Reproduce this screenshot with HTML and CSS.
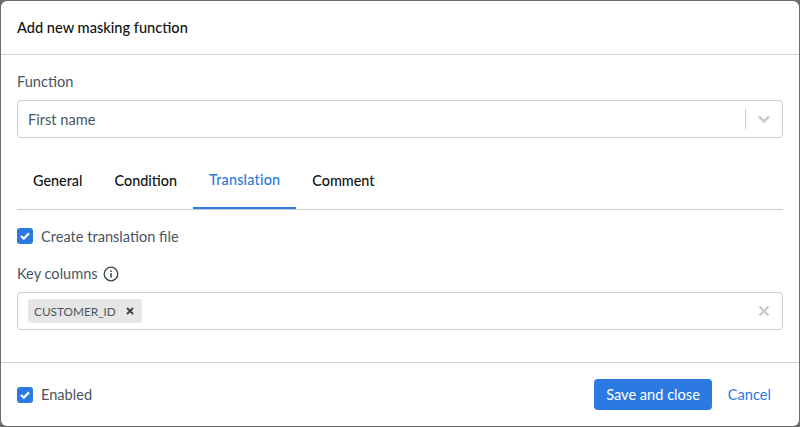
FILE: index.html
```html
<!DOCTYPE html>
<html lang="en">
<head>
<meta charset="utf-8">
<title>Add new masking function</title>
<link rel="stylesheet" href="styles.css">
</head>
<body>
<div class="modal">
  <header class="modal-header">Add new masking function</header>
  <main class="modal-body">
    <div class="field-label">Function</div>
    <div class="select">
      <span class="select-value">First name</span>
      <span class="select-sep"></span>
      <svg class="chevron" width="20" height="20" viewBox="0 0 20 20"><path d="M5 7.5 L10 12.5 L15 7.5" fill="none" stroke="#ccc" stroke-width="2.6"/></svg>
    </div>
    <nav class="tabs">
      <span class="tab">General</span>
      <span class="tab">Condition</span>
      <span class="tab active">Translation</span>
      <span class="tab">Comment</span>
    </nav>
    <label class="check check-top">
      <span class="box"><svg width="10" height="8" viewBox="0 0 10 8"><path d="M1 4 L3.8 6.6 L9 1.4" fill="none" stroke="#fff" stroke-width="2.2"/></svg></span>
      <span>Create translation file</span>
    </label>
    <div class="field-label key-label">
      <span>Key columns</span>
      <svg width="16" height="16" viewBox="0 0 16 16"><circle cx="8" cy="8" r="6.8" fill="none" stroke="#3a4350" stroke-width="1.3"/><rect x="7.3" y="7" width="1.5" height="4.6" fill="#3a4350"/><rect x="7.3" y="4.4" width="1.5" height="1.6" fill="#3a4350"/></svg>
    </div>
    <div class="select multi">
      <span class="chip"><span class="chip-text">CUSTOMER_ID</span><svg width="8" height="8" viewBox="0 0 8 8"><path d="M1 1 L7 7 M7 1 L1 7" stroke="#3a4350" stroke-width="1.9"/></svg></span>
      <svg class="clear" width="12" height="12" viewBox="0 0 12 12"><path d="M1.5 1.5 L10.5 10.5 M10.5 1.5 L1.5 10.5" stroke="#ccc" stroke-width="2.4"/></svg>
    </div>
  </main>
  <footer class="modal-footer">
    <label class="check">
      <span class="box"><svg width="10" height="8" viewBox="0 0 10 8"><path d="M1 4 L3.8 6.6 L9 1.4" fill="none" stroke="#fff" stroke-width="2.2"/></svg></span>
      <span>Enabled</span>
    </label>
    <div class="actions">
      <button class="btn-primary">Save and close</button>
      <button class="btn-link">Cancel</button>
    </div>
  </footer>
</div>
</body>
</html>
```
FILE: styles.css
```css
* { box-sizing: border-box; }
html, body { height: 100%; }
body {
  margin: 0;
  padding: 1px;
  background: #6c6c6c;
  font-family: "Lato", "Noto Sans", sans-serif;
  font-size: 14.6px;
  color: #4a5462;
}
.modal {
  height: 425px;
  background: #fff;
  border-radius: 6px;
  display: flex;
  flex-direction: column;
}
.modal-header {
  height: 54px;
  padding: 0 16px;
  display: flex;
  align-items: center;
  color: #111;
  font-weight: 500;
  border-bottom: 1px solid #cdd5da;
}
.modal-body {
  flex: 1;
  padding: 16px 16px 0;
}
.field-label {
  height: 22px;
  line-height: 22px;
  margin-bottom: 7px;
}
.select {
  height: 38px;
  border: 1px solid #ccc;
  border-radius: 4px;
  display: flex;
  align-items: center;
  padding: 0 8px 0 10px;
}
.select-value { flex: 1; }
.select-sep { width: 1px; height: 20px; background: #ccc; margin-right: 8px; }
.tabs {
  display: flex;
  height: 51px;
  margin-top: 21px;
  border-bottom: 1px solid #ccc;
}
.tab {
  padding: 0 16px 7px;
  display: flex;
  align-items: center;
  color: #111;
  font-weight: 500;
  font-size: 14.4px;
  height: 50px;
}
.tab.active {
  color: #2a7ae2;
  letter-spacing: 0.2px;
  border-bottom: 2px solid #2a7ae2;
}
.check {
  display: flex;
  align-items: center;
  gap: 8px;
}
.check-top { margin-top: 17px; height: 18px; }
.box {
  width: 16px;
  height: 16px;
  border-radius: 3px;
  background: #2a7ae2;
  display: flex;
  align-items: center;
  justify-content: center;
}
.key-label {
  display: flex;
  align-items: center;
  gap: 5px;
  margin-top: 18px;
  margin-bottom: 7px;
}
.multi { padding: 0 12px 0 10px; justify-content: space-between; }
.chip {
  height: 24px;
  background: #e6e6e6;
  border-radius: 3px;
  display: flex;
  align-items: center;
  gap: 10px;
  padding: 0 8px 0 6px;
  font-size: 11.8px;
}
.modal-footer {
  height: 64px;
  margin-top: auto;
  padding: 0 16px;
  display: flex;
  align-items: center;
  justify-content: space-between;
  border-top: 1px solid #cdd5da;
}
.actions { display: flex; align-items: center; gap: 4px; }
button {
  font: inherit;
  border: 0;
  background: none;
  height: 31px;
  border-radius: 4px;
  padding: 0 12px;
}
.btn-primary { background: #2a7ae2; color: #fff; }
.btn-link { color: #2a7ae2; }
```
